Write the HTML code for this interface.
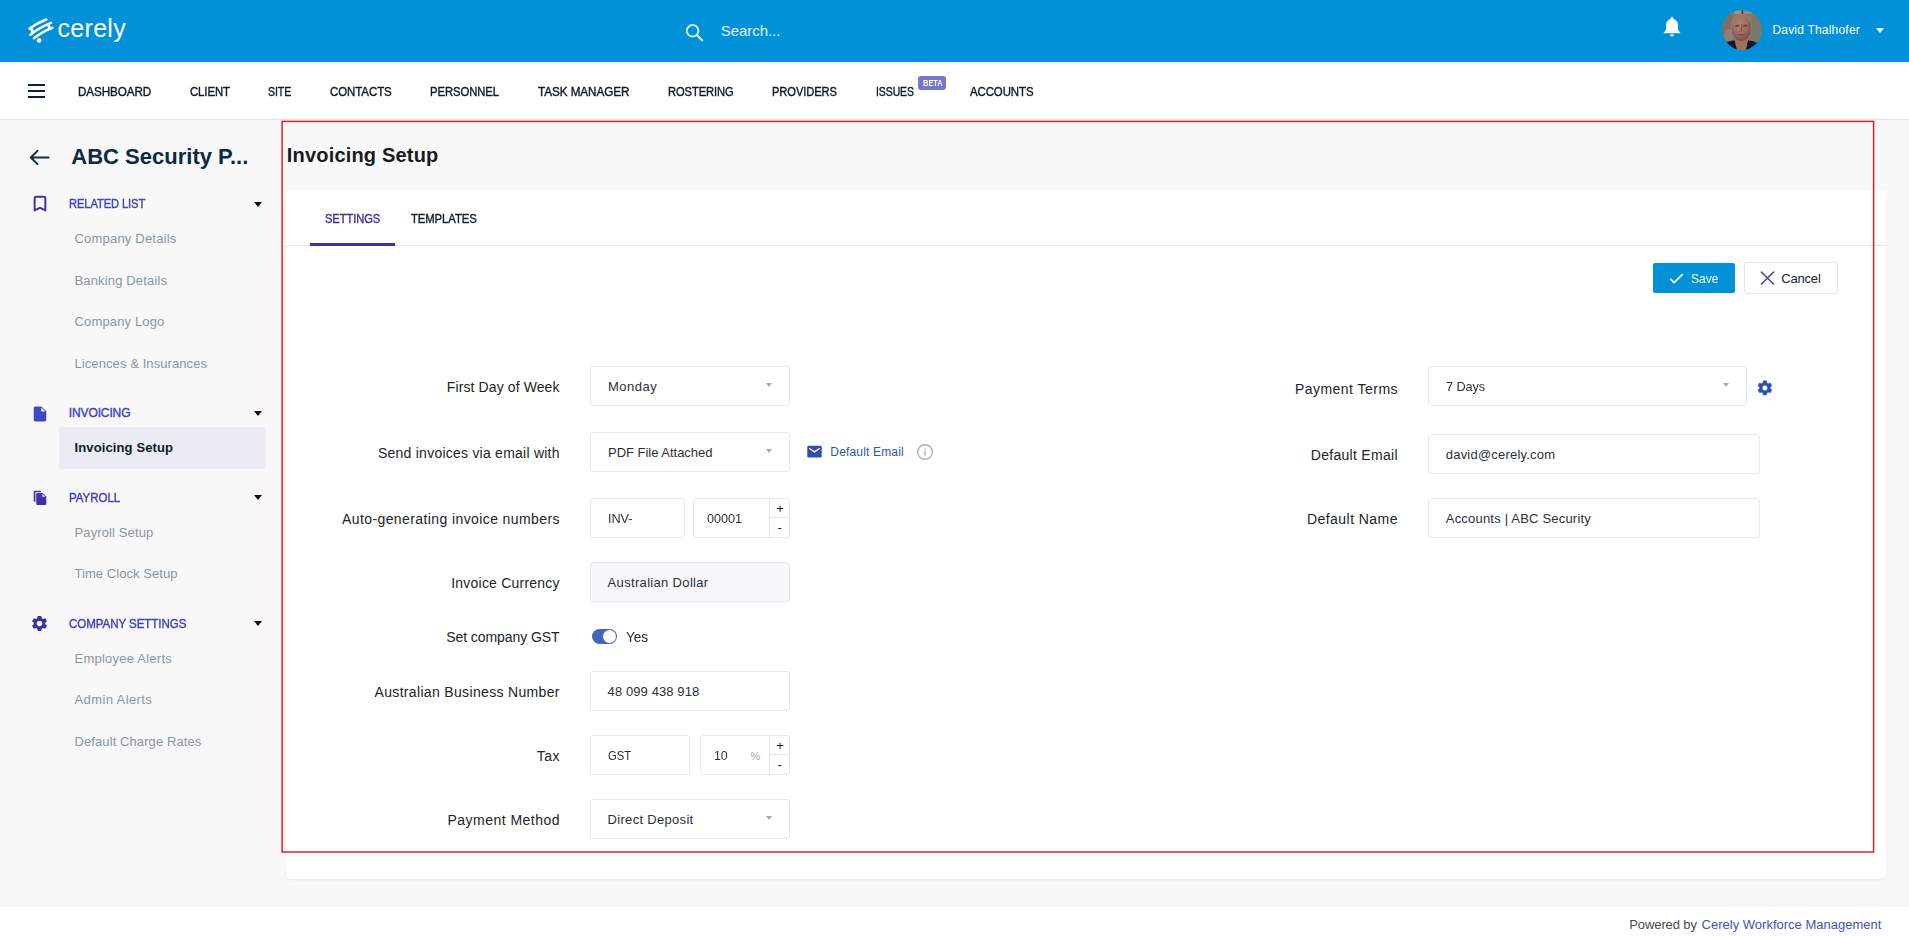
<!DOCTYPE html>
<html lang="en">
<head>
<meta charset="utf-8">
<title>Invoicing Setup - Cerely</title>
<style>
*{box-sizing:border-box;margin:0;padding:0}
html,body{width:1909px;height:936px;overflow:hidden}
body{position:relative;background:#f8f8f8;font-family:"Liberation Sans",sans-serif;}
span,a,h1,h2,label,li{position:absolute;white-space:nowrap;line-height:20px;font-weight:400;text-decoration:none;list-style:none}
div,svg,ul,nav,header,aside,main,footer,section{position:absolute}
.hdr{left:0;top:0;width:1909px;height:62px;background:#0091d9}
.nav{left:0;top:62px;width:1909px;height:58px;background:#fff;border-bottom:1px solid #dfe1ec}
.card{left:286px;top:190px;width:1600px;height:689px;background:#fff;border-radius:5px;box-shadow:0 1px 2px rgba(0,0,0,.08)}
.tabline{left:286px;top:245px;width:1600px;height:1px;background:#e1e4ea}
.tabul{left:310px;top:243px;width:85px;height:3px;background:#3f2db0}
.ftr{left:0;top:907px;width:1909px;height:29px;background:#fff}
.box{border:1px solid #e6e7f0;border-radius:3px;background:#fff;height:40px}
.dis{background:#f8f8fa}
.act{left:59px;top:427px;width:207px;height:42px;background:#ebebf5;border-radius:3px}
.caret{width:0;height:0;border-left:4px solid transparent;border-right:4px solid transparent;border-top:5px solid #111}
.dd{width:0;height:0;border-left:3px solid transparent;border-right:3px solid transparent;border-top:4px solid #a8a8a8}
.hv{-webkit-text-stroke:.38px currentColor}
.spv{width:1px;background:#e6e6ea}
.sph{height:1px;background:#e6e6ea}
</style>
</head>
<body>

<header class="hdr"></header>
<svg style="left:26px;top:16px" width="30" height="30" viewBox="0 0 30 30" fill="none" stroke="#fff" stroke-linecap="round">
<path d="M3.600 12.600 Q11 6.900 20.200 3.500" stroke-width="2.55"/>
<path d="M4.400 18.700 Q13.900 11.200 25.100 6.900" stroke-width="2.55"/>
<path d="M8 22.300 Q16.200 15.600 26.200 11.900" stroke-width="2.55"/>
<path d="M5.6 13.2 L6.8 16.6" stroke-width="2.8"/>
<path d="M22.4 8.4 L23.4 12.4" stroke-width="2.6"/>
<circle cx="13.1" cy="24.5" r="2.25" fill="#fff" stroke="none"/>
</svg>
<span style="left:57.50px;top:18.24px;font-size:25px;color:#fff;letter-spacing:0.303px;">cerely</span>
<svg style="left:684px;top:22px" width="22" height="22" viewBox="0 0 22 22" fill="none" stroke="#cfe8dc" stroke-width="2" stroke-linecap="round"><circle cx="8.6" cy="8.8" r="5.8"/><path d="M13 13.2 L18.3 18.5"/></svg>
<span style="left:720.70px;top:21.40px;font-size:15px;color:#e4f3fb;letter-spacing:-0.041px;">Search...</span>
<svg style="left:1662px;top:16px" width="20" height="23" viewBox="0 0 20 23"><path fill="#fff" d="M10 .9c.8 0 1.4.6 1.4 1.4v.6c2.8.7 4.6 3.1 4.6 6v5l2.2 2.3v1H1.8v-1L4 13.900v-5c0-2.900 1.800-5.300 4.600-6v-.6C8.600 1.500 9.200.9 10 .9zM8 18.600h4c0 1.100-.9 2-2 2s-2-.9-2-2z"/></svg>
<svg style="left:1722px;top:10px" width="40" height="40" viewBox="0 0 40 40">
<defs><clipPath id="av"><circle cx="20" cy="20" r="19.9"/></clipPath>
<filter id="bl" x="-10%" y="-10%" width="120%" height="120%"><feGaussianBlur stdDeviation="0.65"/></filter>
<radialGradient id="fc" cx="44%" cy="36%" r="62%"><stop offset="0" stop-color="#b5826f"/><stop offset=".55" stop-color="#a06f62"/><stop offset="1" stop-color="#75534d"/></radialGradient></defs>
<g clip-path="url(#av)"><rect width="40" height="40" fill="#85776a"/>
<g filter="url(#bl)">
<rect x="-2" y="-2" width="12" height="44" fill="#80705f"/><rect x="30" y="-2" width="12" height="44" fill="#7c746b"/>
<rect x="12" y="0" width="7" height="4" fill="#9c9188"/><rect x="22" y="0" width="8" height="4" fill="#958b82"/>
<rect x="19.800" y="0" width="1" height="4" fill="#3a3030"/>
<ellipse cx="7" cy="25" rx="5" ry="6" fill="#8c7f80"/>
<path d="M-2 42 L-2 36 Q5 31 12 30.500 L27 30.500 Q34 31 42 37 L42 42Z" fill="#17183a"/>
<path d="M12.500 30 L26 30 L24 40 L21 42 L15 40Z" fill="#a46f55"/>
<ellipse cx="19.300" cy="17.300" rx="10.400" ry="13.400" fill="#8d857f"/>
<ellipse cx="19.300" cy="18" rx="9.900" ry="13" fill="url(#fc)"/>
<ellipse cx="15.300" cy="15.700" rx="2.300" ry="1" fill="#5a4048" opacity=".9"/><ellipse cx="23" cy="15.700" rx="2.300" ry="1.100" fill="#5a4048" opacity=".9"/>
<path d="M19.800 14 L19.500 21 L18 21.500" stroke="#7d5048" stroke-width="1.300" fill="none" opacity=".85"/>
<path d="M16.500 24.800 L22.500 24.800" stroke="#6c3f40" stroke-width="1.100" opacity=".9"/>
</g></g></svg>
<span style="left:1772.40px;top:19.64px;font-size:12px;color:#fff;letter-spacing:0.208px;">David Thalhofer</span>
<div style="left:1876px;top:28px;width:0;height:0;border-left:4px solid transparent;border-right:4px solid transparent;border-top:5px solid #fff"></div>
<nav class="nav"></nav>
<div style="left:28px;top:84px;width:17px;height:2px;background:#0c2236"></div>
<div style="left:28px;top:90px;width:17px;height:2px;background:#0c2236"></div>
<div style="left:28px;top:96px;width:17px;height:2px;background:#0c2236"></div>
<a class="hv" style="left:77.50px;top:81.84px;font-size:12px;color:#121a24;letter-spacing:-0.080px;transform:scaleX(0.9718);transform-origin:0 0;">DASHBOARD</a>
<a class="hv" style="left:189.50px;top:81.84px;font-size:12px;color:#121a24;letter-spacing:-0.080px;transform:scaleX(0.9462);transform-origin:0 0;">CLIENT</a>
<a class="hv" style="left:268.00px;top:81.84px;font-size:12px;color:#121a24;letter-spacing:-0.080px;transform:scaleX(0.8796);transform-origin:0 0;">SITE</a>
<a class="hv" style="left:330.00px;top:81.84px;font-size:12px;color:#121a24;letter-spacing:-0.080px;transform:scaleX(0.9566);transform-origin:0 0;">CONTACTS</a>
<a class="hv" style="left:430.00px;top:81.84px;font-size:12px;color:#121a24;letter-spacing:-0.080px;transform:scaleX(0.9403);transform-origin:0 0;">PERSONNEL</a>
<a class="hv" style="left:537.50px;top:81.84px;font-size:12px;color:#121a24;letter-spacing:-0.080px;transform:scaleX(0.9778);transform-origin:0 0;">TASK MANAGER</a>
<a class="hv" style="left:667.50px;top:81.84px;font-size:12px;color:#121a24;letter-spacing:-0.080px;transform:scaleX(0.9300);transform-origin:0 0;">ROSTERING</a>
<a class="hv" style="left:772.00px;top:81.84px;font-size:12px;color:#121a24;letter-spacing:-0.080px;transform:scaleX(0.9280);transform-origin:0 0;">PROVIDERS</a>
<a class="hv" style="left:875.75px;top:81.84px;font-size:12px;color:#121a24;letter-spacing:-0.080px;transform:scaleX(0.8712);transform-origin:0 0;">ISSUES</a>
<a class="hv" style="left:969.50px;top:81.84px;font-size:12px;color:#121a24;letter-spacing:-0.080px;transform:scaleX(0.9509);transform-origin:0 0;">ACCOUNTS</a>
<div style="left:918px;top:76px;width:28px;height:14px;background:#7576cd;border-radius:3px"></div>
<span style="left:922.80px;top:73.15px;font-size:8.8px;color:#fff;font-weight:700;letter-spacing:-0.080px;transform:scaleX(0.8586);transform-origin:0 0;">BETA</span>
<aside style="left:0;top:120px;width:280px;height:787px"></aside>
<svg style="left:28px;top:148px" width="24" height="20" viewBox="0 0 24 20" fill="none" stroke="#0c2e46" stroke-width="2" stroke-linecap="round" stroke-linejoin="round"><path d="M20.500 9.500H3.200M9.500 2.900L2.900 9.500l6.600 6.600"/></svg>
<h2 style="left:71.30px;top:146.78px;font-size:22px;color:#0b2b43;font-weight:700;letter-spacing:0.007px;">ABC Security P...</h2>
<svg style="left:32px;top:195px" width="16" height="18" viewBox="0 0 16 18" fill="none" stroke="#3b2fa8" stroke-width="1.9" stroke-linejoin="miter"><path d="M2.650 15.300V3.300Q2.650 1.800 4.150 1.800H11.850Q13.350 1.800 13.350 3.300V15.300L8 12.800Z"/></svg>
<span class="hv" style="left:68.80px;top:194.04px;font-size:12px;color:#3d43c0;letter-spacing:-0.080px;transform:scaleX(0.9264);transform-origin:0 0;">RELATED LIST</span>
<div class="caret" style="left:254px;top:202px"></div>
<a style="left:74.50px;top:228.70px;font-size:13px;color:#8a96a1;letter-spacing:0.197px;">Company Details</a>
<a style="left:74.50px;top:270.80px;font-size:13px;color:#8a96a1;letter-spacing:0.155px;">Banking Details</a>
<a style="left:74.50px;top:311.80px;font-size:13px;color:#8a96a1;letter-spacing:0.144px;">Company Logo</a>
<a style="left:74.50px;top:353.70px;font-size:13px;color:#8a96a1;letter-spacing:0.085px;">Licences &amp; Insurances</a>
<svg style="left:33.300px;top:405.500px" width="14" height="16" viewBox="0 0 14 16"><path fill="#3f47c3" d="M2.300.600h6.200l4.700 4.700v8.500c0 .9-.7 1.600-1.600 1.600H2.300c-.9 0-1.600-.7-1.600-1.600V2.200C.7 1.300 1.400.6 2.300.6z"/><path fill="#f8f8f8" d="M8.300 1.600v3.900h3.900z"/></svg>
<span class="hv" style="left:68.80px;top:402.84px;font-size:12px;color:#3d43c0;letter-spacing:-0.121px;">INVOICING</span>
<div class="caret" style="left:254px;top:411px"></div>
<div class="act"></div>
<a style="left:74.50px;top:437.50px;font-size:13px;color:#0e1a26;font-weight:700;letter-spacing:0.123px;">Invoicing Setup</a>
<svg style="left:33.200px;top:490.300px" width="14" height="16" viewBox="0 0 14 16"><path fill="#4530a8" d="M1.500.800h6.300v1.400H2.400v9.600H1.500c-.5 0-.8-.4-.8-.8V1.600c0-.4.400-.8.800-.8z"/><path fill="#4530a8" d="M4.600 2.900h5l3.700 3.700v7.100c0 .8-.6 1.400-1.400 1.400H4.600c-.8 0-1.400-.6-1.400-1.400V4.300c0-.8.600-1.400 1.400-1.400z"/><path fill="#f8f8f8" d="M9.400 3.900v2.900h2.900z"/></svg>
<span class="hv" style="left:68.80px;top:487.54px;font-size:12px;color:#3d43c0;letter-spacing:-0.080px;transform:scaleX(0.9642);transform-origin:0 0;">PAYROLL</span>
<div class="caret" style="left:254px;top:495px"></div>
<a style="left:74.50px;top:522.50px;font-size:13px;color:#8a96a1;letter-spacing:0.119px;">Payroll Setup</a>
<a style="left:74.50px;top:563.50px;font-size:13px;color:#8a96a1;letter-spacing:0.059px;">Time Clock Setup</a>
<svg style="left:30px;top:614px" width="19" height="19" viewBox="0 0 24 24"><path fill="#3b2fa8" d="M19.14 12.940c.040-.300.060-.610.060-.940 0-.320-.020-.640-.070-.940l2.030-1.580a.49.49 0 0 0 .12-.610l-1.920-3.320a.488.488 0 0 0-.59-.22l-2.390.96c-.500-.380-1.030-.700-1.620-.940l-.360-2.540a.484.484 0 0 0-.48-.41h-3.840c-.240 0-.430.170-.470.410l-.360 2.540c-.590.240-1.130.570-1.620.940l-2.390-.96c-.220-.080-.470 0-.590.220L2.740 8.870c-.120.210-.080.470.120.610l2.030 1.580c-.050.300-.090.630-.090.940s.020.640.070.940l-2.030 1.580a.49.49 0 0 0-.12.610l1.920 3.320c.120.220.370.290.59.220l2.390-.96c.500.380 1.030.700 1.620.940l.360 2.540c.050.240.240.410.480.410h3.840c.240 0 .440-.170.470-.410l.360-2.540c.590-.240 1.130-.560 1.620-.940l2.390.96c.220.080.470 0 .590-.220l1.920-3.320c.120-.220.070-.470-.120-.610l-2.010-1.580zM12 15.600c-1.980 0-3.600-1.620-3.600-3.600s1.620-3.600 3.600-3.600 3.600 1.620 3.600 3.600-1.620 3.600-3.600 3.600z"/></svg>
<span class="hv" style="left:68.80px;top:613.84px;font-size:12px;color:#3d43c0;letter-spacing:-0.080px;transform:scaleX(0.9646);transform-origin:0 0;">COMPANY SETTINGS</span>
<div class="caret" style="left:254px;top:621px"></div>
<a style="left:74.50px;top:648.50px;font-size:13px;color:#8a96a1;letter-spacing:0.237px;">Employee Alerts</a>
<a style="left:74.50px;top:689.80px;font-size:13px;color:#8a96a1;letter-spacing:0.389px;">Admin Alerts</a>
<a style="left:74.50px;top:731.70px;font-size:13px;color:#8a96a1;letter-spacing:0.092px;">Default Charge Rates</a>
<h1 style="left:286.80px;top:145.07px;font-size:20px;color:#191a22;font-weight:700;letter-spacing:0.186px;">Invoicing Setup</h1>
<section class="card"></section>
<div class="tabline"></div><div class="tabul"></div>
<a class="hv" style="left:325.00px;top:208.84px;font-size:12px;color:#3b2fa8;letter-spacing:-0.080px;transform:scaleX(0.9286);transform-origin:0 0;">SETTINGS</a>
<a class="hv" style="left:410.80px;top:208.84px;font-size:12px;color:#10202e;letter-spacing:-0.080px;transform:scaleX(0.9410);transform-origin:0 0;">TEMPLATES</a>
<div style="left:1653px;top:263px;width:82px;height:30px;background:#0091d9;border-radius:2px"></div>
<svg style="left:1668px;top:272px" width="16" height="13" viewBox="0 0 16 13" fill="none" stroke="#fff" stroke-width="1.800" stroke-linecap="round" stroke-linejoin="round"><path d="M2.900 7.400l3.200 3.300L14.300 2.600"/></svg>
<span style="left:1691.30px;top:268.50px;font-size:13px;color:#fff;letter-spacing:-0.080px;transform:scaleX(0.9357);transform-origin:0 0;">Save</span>
<div style="left:1744px;top:262px;width:94px;height:32px;background:#fff;border:1px solid #e4e4ea;border-radius:3px"></div>
<svg style="left:1760px;top:271px" width="15" height="14" viewBox="0 0 15 14" fill="none" stroke="#55558a" stroke-width="1.700" stroke-linecap="round"><path d="M1.500 1.200l12 11.800M13.500 1.200l-12 11.800"/></svg>
<span style="left:1781.30px;top:268.50px;font-size:13px;color:#14202e;letter-spacing:-0.193px;">Cancel</span>
<label style="left:446.75px;top:377.15px;font-size:14px;color:#232326;letter-spacing:0.110px;">First Day of Week</label>
<label style="left:378.00px;top:443.15px;font-size:14px;color:#232326;letter-spacing:0.238px;">Send invoices via email with</label>
<label style="left:342.00px;top:509.35px;font-size:14px;color:#232326;letter-spacing:0.401px;">Auto-generating invoice numbers</label>
<label style="left:451.25px;top:573.15px;font-size:14px;color:#232326;letter-spacing:0.214px;">Invoice Currency</label>
<label style="left:446.25px;top:627.15px;font-size:14px;color:#232326;letter-spacing:-0.081px;">Set company GST</label>
<label style="left:374.50px;top:682.15px;font-size:14px;color:#232326;letter-spacing:0.335px;">Australian Business Number</label>
<label style="left:536.75px;top:746.35px;font-size:14px;color:#232326;letter-spacing:0.482px;">Tax</label>
<label style="left:447.50px;top:810.15px;font-size:14px;color:#232326;letter-spacing:0.474px;">Payment Method</label>
<div class="box" style="left:590px;top:366px;width:200px"></div>
<span style="left:608.00px;top:376.70px;font-size:13px;color:#2d3035;letter-spacing:0.490px;">Monday</span>
<div class="dd" style="left:766px;top:383px"></div>
<div class="box" style="left:590px;top:432px;width:200px"></div>
<span style="left:608.00px;top:442.90px;font-size:13px;color:#2d3035;letter-spacing:-0.017px;">PDF File Attached</span>
<div class="dd" style="left:766px;top:449px"></div>
<div class="box" style="left:590px;top:498px;width:95px"></div>
<span style="left:608.00px;top:508.50px;font-size:13px;color:#2d3035;letter-spacing:-0.080px;transform:scaleX(0.9783);transform-origin:0 0;">INV-</span>
<div class="box" style="left:693px;top:498px;width:97px"></div>
<span style="left:706.60px;top:508.50px;font-size:13px;color:#2d3035;letter-spacing:-0.080px;transform:scaleX(0.9768);transform-origin:0 0;">00001</span>
<div class="box dis" style="left:590px;top:562px;width:200px"></div>
<span style="left:607.60px;top:572.90px;font-size:13px;color:#2d3035;letter-spacing:0.327px;">Australian Dollar</span>
<div class="box" style="left:590px;top:671px;width:200px"></div>
<span style="left:607.60px;top:681.70px;font-size:13px;color:#2d3035;letter-spacing:0.095px;">48 099 438 918</span>
<div class="box" style="left:590px;top:735px;width:100px"></div>
<span style="left:607.60px;top:745.50px;font-size:13px;color:#2d3035;letter-spacing:-0.080px;transform:scaleX(0.8696);transform-origin:0 0;">GST</span>
<div class="box" style="left:700px;top:735px;width:90px"></div>
<span style="left:714.30px;top:745.50px;font-size:13px;color:#2d3035;letter-spacing:-0.080px;transform:scaleX(0.9527);transform-origin:0 0;">10</span>
<span style="left:750.50px;top:745.69px;font-size:11px;color:#a9abb0;">%</span>
<div class="box" style="left:590px;top:799px;width:200px"></div>
<span style="left:607.60px;top:809.50px;font-size:13px;color:#2d3035;letter-spacing:0.305px;">Direct Deposit</span>
<div class="dd" style="left:766px;top:816px"></div>
<div class="spv" style="left:769px;top:499px;height:38px"></div>
<div class="sph" style="left:769px;top:517px;width:20px"></div>
<span style="left:776.20px;top:499.20px;font-size:13px;color:#222;">+</span>
<span style="left:777.60px;top:518.10px;font-size:13px;color:#222;">-</span>
<div class="spv" style="left:769px;top:736px;height:38px"></div>
<div class="sph" style="left:769px;top:754px;width:20px"></div>
<span style="left:776.20px;top:736.20px;font-size:13px;color:#222;">+</span>
<span style="left:777.60px;top:755.10px;font-size:13px;color:#222;">-</span>
<div style="left:591.600px;top:629.400px;width:25.500px;height:14.800px;border-radius:8px;background:#4366ba"></div>
<div style="left:603.000px;top:630.300px;width:13.000px;height:13.000px;border-radius:7px;background:#fff"></div>
<span style="left:625.50px;top:627.15px;font-size:14px;color:#232326;letter-spacing:-0.080px;transform:scaleX(0.9701);transform-origin:0 0;">Yes</span>
<svg style="left:807px;top:445px" width="15" height="13" viewBox="0 0 15 13"><rect x=".3" y=".8" width="14.400" height="11.700" rx="1.300" fill="#2d4db5"/><path d="M2.200 3.300L7.500 6.900l5.300-3.600" fill="none" stroke="#fff" stroke-width="1.300"/></svg>
<a style="left:830.30px;top:441.84px;font-size:12px;color:#2d55b8;letter-spacing:0.170px;">Default Email</a>
<svg style="left:916px;top:443px" width="18" height="18" viewBox="0 0 18 18"><circle cx="9" cy="9" r="7.300" fill="none" stroke="#a7b2b7" stroke-width="1.400"/><rect x="8.300" y="7.600" width="1.400" height="5" fill="#a7b2b7"/><rect x="8.300" y="4.900" width="1.400" height="1.500" fill="#a7b2b7"/></svg>
<label style="left:1295.00px;top:379.35px;font-size:14px;color:#232326;letter-spacing:0.459px;">Payment Terms</label>
<label style="left:1310.75px;top:445.15px;font-size:14px;color:#232326;letter-spacing:0.291px;">Default Email</label>
<label style="left:1307.00px;top:508.95px;font-size:14px;color:#232326;letter-spacing:0.446px;">Default Name</label>
<div class="box" style="left:1428px;top:366px;width:319px"></div>
<span style="left:1445.80px;top:376.70px;font-size:13px;color:#2d3035;letter-spacing:-0.080px;transform:scaleX(0.9785);transform-origin:0 0;">7 Days</span>
<div class="dd" style="left:1723px;top:383px"></div>
<svg style="left:1755.900px;top:379.200px" width="17.800" height="17.800" viewBox="0 0 24 24"><path fill="#2b4eb2" stroke="#2b4eb2" stroke-width=".5" d="M19.14 12.940c.040-.300.060-.610.060-.940 0-.320-.020-.640-.070-.940l2.030-1.580a.49.49 0 0 0 .12-.610l-1.920-3.320a.488.488 0 0 0-.59-.22l-2.390.96c-.500-.380-1.030-.700-1.620-.940l-.360-2.540a.484.484 0 0 0-.48-.41h-3.840c-.240 0-.430.170-.470.410l-.360 2.540c-.590.240-1.130.570-1.620.940l-2.390-.96c-.220-.080-.470 0-.590.220L2.740 8.870c-.120.210-.080.470.120.610l2.030 1.580c-.050.300-.090.630-.090.940s.020.640.070.940l-2.030 1.580a.49.49 0 0 0-.12.610l1.920 3.320c.120.220.370.290.59.220l2.390-.96c.500.380 1.030.700 1.620.940l.360 2.540c.050.240.240.410.480.410h3.840c.240 0 .440-.170.470-.410l.360-2.540c.590-.240 1.130-.560 1.620-.940l2.390.96c.220.080.470 0 .590-.220l1.920-3.320c.120-.220.070-.470-.120-.610l-2.010-1.580zM12 15.600c-1.980 0-3.600-1.620-3.600-3.600s1.620-3.600 3.600-3.600 3.600 1.620 3.600 3.600-1.620 3.600-3.600 3.600z"/></svg>
<div class="box" style="left:1428px;top:434px;width:332px"></div>
<span style="left:1445.80px;top:444.70px;font-size:13px;color:#2d3035;letter-spacing:0.203px;">david@cerely.com</span>
<div class="box" style="left:1428px;top:498px;width:332px"></div>
<span style="left:1445.80px;top:508.50px;font-size:13px;color:#2d3035;letter-spacing:0.197px;">Accounts | ABC Security</span>
<svg style="left:0;top:0" width="1909" height="936" viewBox="0 0 1909 936"><rect x="282.1" y="121.4" width="1591.5" height="730.6" fill="none" stroke="#e8161c" stroke-width="1.45"/></svg>
<footer class="ftr"></footer>
<span style="left:1629.30px;top:914.90px;font-size:13px;color:#4a4a4a;letter-spacing:-0.106px;">Powered by</span>
<a style="left:1701.60px;top:914.90px;font-size:13px;color:#3d55b5;letter-spacing:0.005px;">Cerely Workforce Management</a>
</body></html>
